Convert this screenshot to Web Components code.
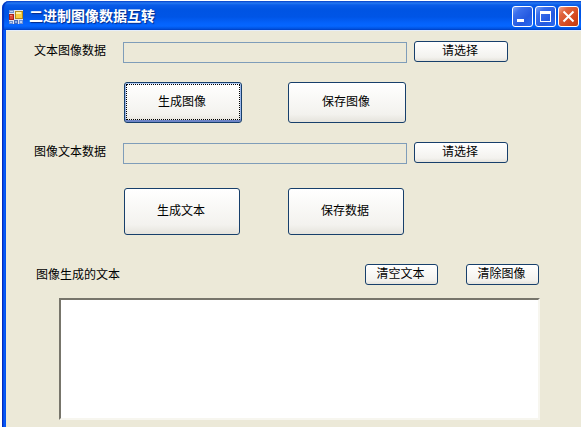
<!DOCTYPE html>
<html lang="zh-CN">
<head>
<meta charset="utf-8">
<title>二进制图像数据互转</title>
<style>
  body {
    margin: 0;
    background: #fff;
    color: #000;
    font: 12px/16px "Liberation Sans", "Noto Sans CJK SC", sans-serif;
  }
</style>
</head>
<body>
<xp-window caption="二进制图像数据互转">
  <file-row label="文本图像数据" action="请选择"></file-row>
  <button-row>
    <xp-button size="large" focused>生成图像</xp-button>
    <xp-button size="large">保存图像</xp-button>
  </button-row>
  <file-row label="图像文本数据" action="请选择"></file-row>
  <button-row tall>
    <xp-button size="large">生成文本</xp-button>
    <xp-button size="large">保存数据</xp-button>
  </button-row>
  <text-output label="图像生成的文本">
    <xp-button slot="actions" size="small">清空文本</xp-button>
    <xp-button slot="actions" size="small">清除图像</xp-button>
  </text-output>
</xp-window>

<script>
/**
 * Ventana de estilo XP: marco, barra de título y contenido por slot
 */
class XpWindow extends HTMLElement {
  constructor() {
    super();
    this.attachShadow({ mode: 'open' });
    this.shadowRoot.innerHTML = `
      <style>
        :host {
          display: flex;
          flex-direction: column;
          box-sizing: border-box;
          min-height: 100vh;
          padding-top: 1px;
          padding-left: 2px;
          overflow: hidden;
        }
        header {
          display: flex;
          align-items: center;
          box-sizing: border-box;
          height: 29px;
          padding: 2px 2px 0 7px;
          border-radius: 7px 0 0 0;
          background: linear-gradient(#0842c8 0, #2478f2 2px, #0a5ce8 4px, #0054e3 8px, #0055e6 16px, #0462fb 22px, #0566ff 25px, #0050dc 28px, #0040c0 29px);
          box-shadow: inset 2px 0 1px #0038c4;
        }
        h1 {
          flex: 1;
          margin: 0 0 0 6px;
          padding-bottom: 2px;
          color: #fff;
          font-size: 14px;
          line-height: 20px;
          font-weight: 700;
          text-shadow: 1px 1px 1px #062b86;
        }
        nav { display: flex; gap: 2px; }
        nav button {
          box-sizing: border-box;
          width: 21px;
          height: 21px;
          padding: 0;
          border: 1px solid #fff;
          border-radius: 3px;
          background: linear-gradient(135deg, #7aa2f5 0, #3b6fec 25%, #2459e0 65%, #2a6cf2);
        }
        nav .close { background: linear-gradient(135deg, #f2a58e 0, #e0653f 25%, #d4461d 70%, #c23b10); }
        svg { display: block; }
        main {
          flex: 1;
          padding: 11px 41px 7px 28px;
          border-left: 4px solid #0848e0;
          background: #ece9d8;
          box-shadow: inset 0 1px #e6eefa;
          border-image: linear-gradient(to right, #001ea8 0, #0038d8 1px, #0a5cf8 2px, #0050ee 4px) 0 0 0 4;
        }
      </style>
      <header>
        <svg width="14" height="14" viewBox="0 0 14 14" aria-hidden="true">
          <path fill="#dfe4f0" d="M0 0h14v14H0z"/>
          <path fill="#6f8fd0" d="M0 0h5v3H0zM0 11h4v3H0zM10 10h4v4h-4z"/>
          <path fill="#b8d0f4" d="M1 1h3v1H1zM1 12h2v1H1zM11 11h2v2h-2z"/>
          <path fill="#a8201c" d="M0 4h5v6H0z"/>
          <path fill="#e04838" d="M1 5h3v4H1z"/>
          <path fill="#f08c70" d="M1 5h2v1H1z"/>
          <path fill="#b88b18" d="M6 1h8v8H6z"/>
          <path fill="#f7cf45" d="M7 2h6v6H7z"/>
          <path fill="#fff0a0" d="M7 2h5v2H7z"/>
          <path fill="#4468b8" d="M5 10h4v4H5z"/>
          <path fill="#88aee8" d="M6 11h2v2H6z"/>
        </svg>
        <h1></h1>
        <nav>
          <button type="button" aria-label="最小化">
            <svg width="19" height="19" viewBox="0 0 19 19"><path fill="#fff" d="M4 12h7v3H4z"/></svg>
          </button>
          <button type="button" aria-label="最大化">
            <svg width="19" height="19" viewBox="0 0 19 19"><path fill="#fff" fill-rule="evenodd" d="M4 4h11v11H4zM5 7v7h9V7z"/></svg>
          </button>
          <button type="button" class="close" aria-label="关闭">
            <svg width="19" height="19" viewBox="0 0 19 19"><path fill="none" stroke="#fff" stroke-width="2" d="M4.500 4.500l10 10M14.500 4.500l-10 10"/></svg>
          </button>
        </nav>
      </header>
      <main><slot></slot></main>
    `;
    this.shadowRoot.querySelector('h1').textContent = this.getAttribute('caption');
  }
}

class XpButton extends HTMLElement {
  constructor() {
    super();
    this.attachShadow({ mode: 'open' });
    this.shadowRoot.innerHTML = `
      <style>
        :host { display: block; width: 94px; height: 21px; }
        :host([size="large"]) { width: var(--large-width, 118px); height: var(--large-height, 41px); }
        :host([size="small"]) { width: 73px; }
        button {
          position: relative;
          display: block;
          box-sizing: border-box;
          width: 100%;
          height: 100%;
          padding: 0 2px 1px 0;
          border: 1px solid #173f6b;
          border-radius: 3px;
          background: linear-gradient(#fff, #f3f2ee 80%, #e5e3dc);
          color: inherit;
          font: inherit;
        }
        :host([focused]) button { box-shadow: inset 0 1px #b8d0f6, inset 0 -2px #6d84c6, inset 1px 0 #9db8ea, inset -1px 0 #9db8ea; }
        /* rectángulo de foco punteado */
        :host([focused]) button::after {
          content: "";
          position: absolute;
          inset: 1px 1px 2px;
          border: 1px dotted #000;
        }
      </style>
      <button type="button"><slot></slot></button>
    `;
  }
}

/**
 * Fila con etiqueta, ruta de solo lectura y botón de selección
 */
class FileRow extends HTMLElement {
  constructor() {
    super();
    this.attachShadow({ mode: 'open' });
    this.shadowRoot.innerHTML = `
      <style>
        :host {
          display: grid;
          grid-template-columns: 82px 1fr 94px;
          column-gap: 7px;
          align-items: start;
          margin-right: 32px;
        }
        label { padding-top: 2px; }
        input {
          box-sizing: border-box;
          width: 100%;
          height: 21px;
          margin: 1px 0 0;
          padding: 0 3px;
          border: 1px solid #7f9db9;
          background: transparent;
          font: inherit;
        }
      </style>
      <label for="path"></label>
      <input id="path" type="text" readonly>
      <xp-button></xp-button>
    `;
    this.shadowRoot.querySelector('label').textContent = this.getAttribute('label');
    this.shadowRoot.querySelector('xp-button').textContent = this.getAttribute('action');
  }
}

class ButtonRow extends HTMLElement {
  constructor() {
    super();
    this.attachShadow({ mode: 'open' });
    this.shadowRoot.innerHTML = `
      <style>
        :host {
          display: flex;
          gap: 46px;
          padding: 19px 0 19px 90px;
        }
        :host([tall]) {
          --large-width: 116px;
          --large-height: 47px;
          gap: 48px;
          padding: 24px 0 29px 90px;
        }
      </style>
      <slot></slot>
    `;
  }
}

class TextOutput extends HTMLElement {
  constructor() {
    super();
    this.attachShadow({ mode: 'open' });
    this.shadowRoot.innerHTML = `
      <style>
        :host { display: block; }
        div {
          display: flex;
          align-items: center;
          gap: 28px;
          padding: 0 1px 13px 2px;
        }
        label { flex: 1; }
        textarea {
          display: block;
          box-sizing: border-box;
          width: calc(100% - 25px);
          height: 122px;
          margin: 0 0 0 25px;
          padding: 2px;
          border: 2px solid;
          border-color: #77756b #f7f6ef #f7f6ef #77756b;
          background: #fff;
          font: inherit;
          resize: none;
          outline: none;
        }
      </style>
      <div>
        <label for="output"></label>
        <slot name="actions"></slot>
      </div>
      <textarea id="output"></textarea>
    `;
    this.shadowRoot.querySelector('label').textContent = this.getAttribute('label');
  }
}

customElements.define('xp-button', XpButton);
customElements.define('file-row', FileRow);
customElements.define('button-row', ButtonRow);
customElements.define('text-output', TextOutput);
customElements.define('xp-window', XpWindow);
</script>
</body>
</html>
